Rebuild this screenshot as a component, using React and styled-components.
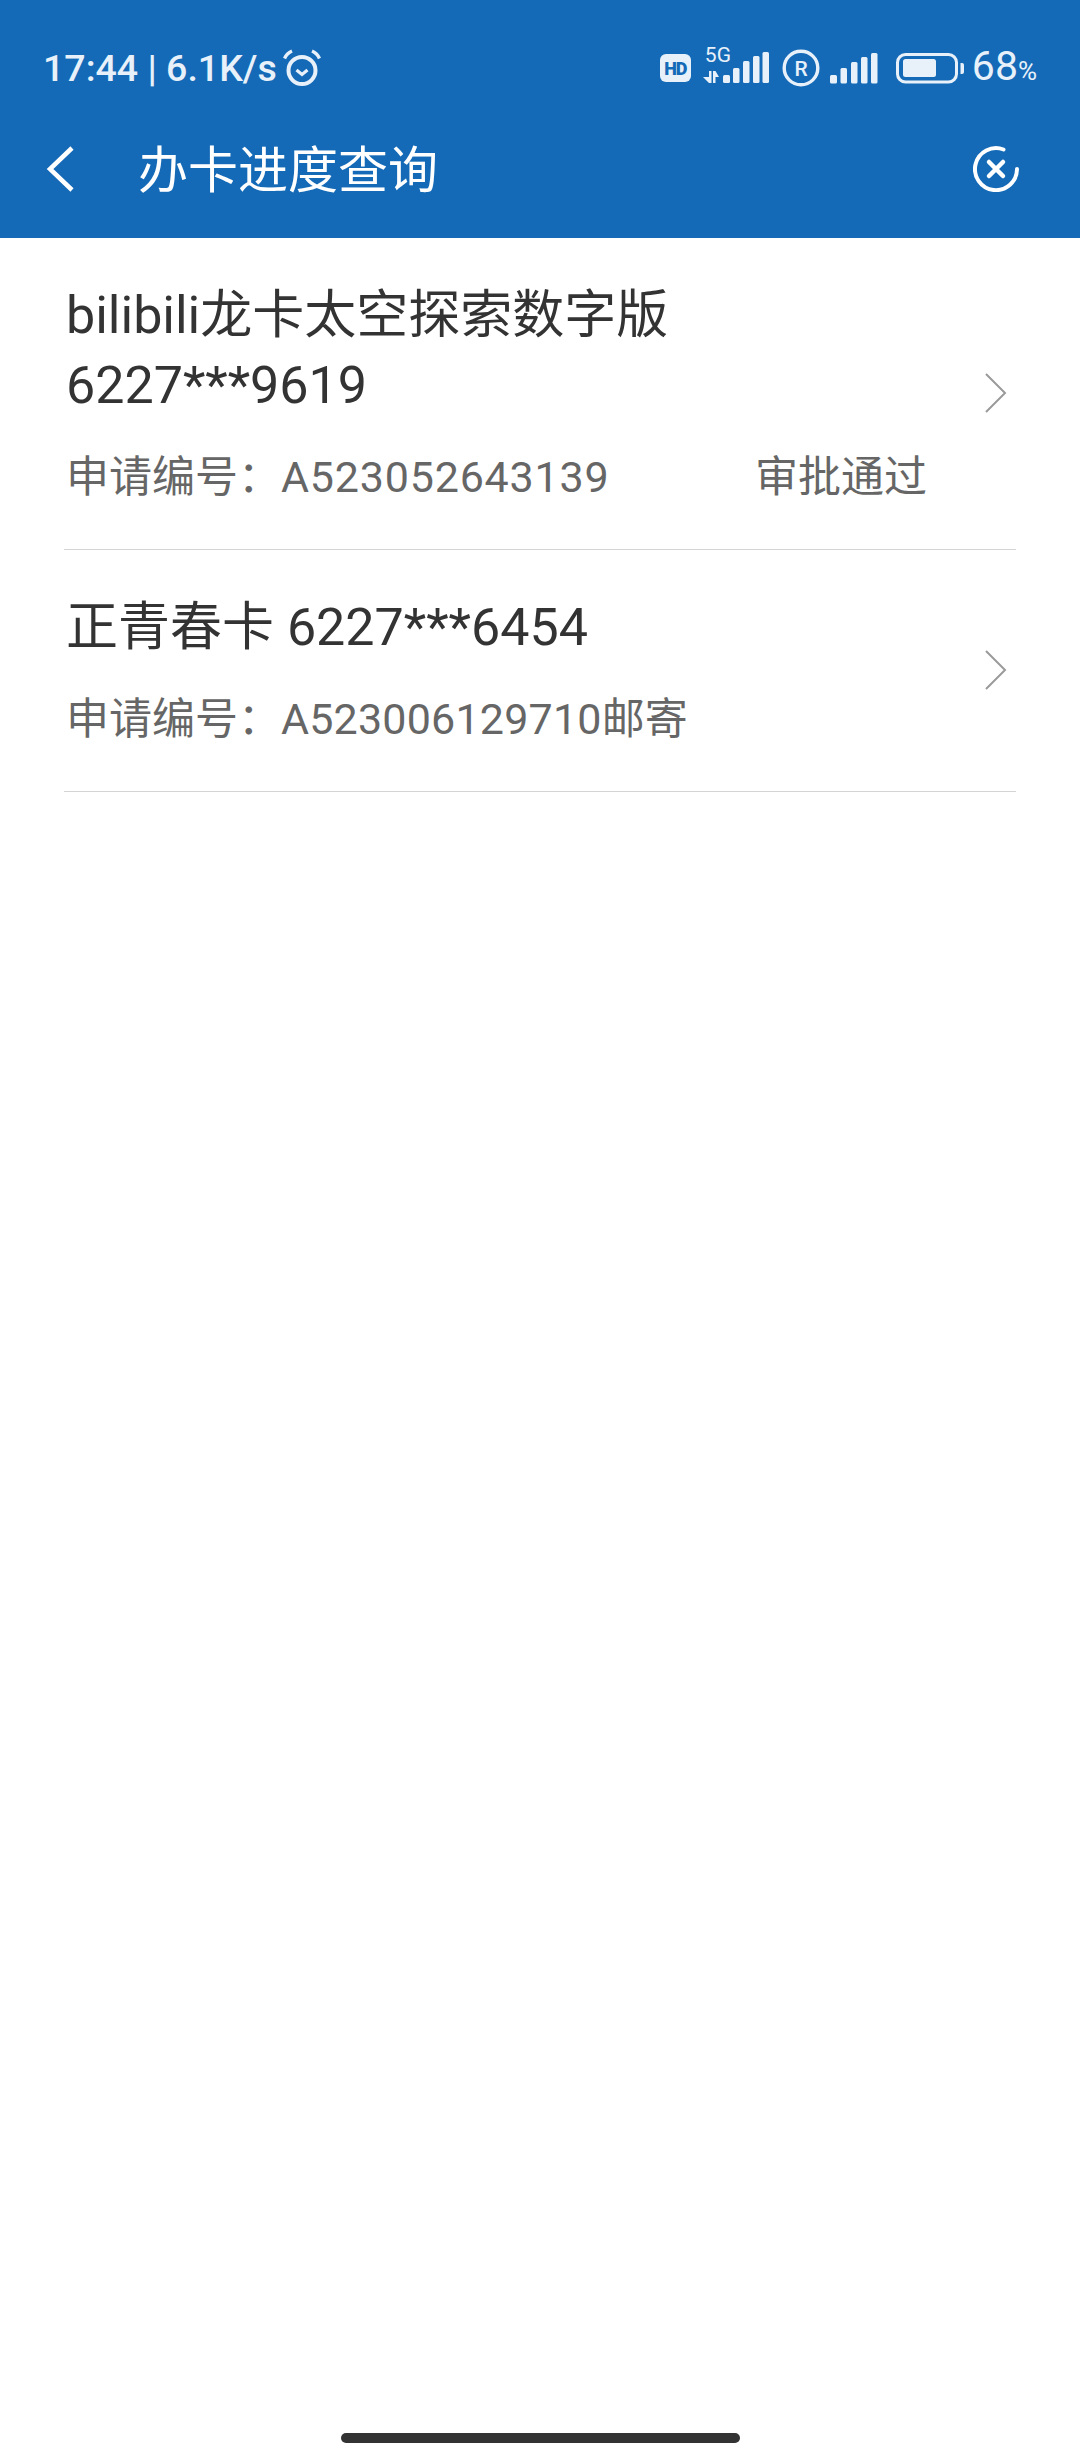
import React from "react";
import styled, { createGlobalStyle } from "styled-components";

const GlobalStyle = createGlobalStyle`
  html, body {
    margin: 0;
    padding: 0;
    background: #fff;
  }
  * {
    box-sizing: border-box;
  }
`;

const FONT = `Roboto, "Noto Sans CJK SC", sans-serif`;

const applications = [
  {
    id: 1,
    title: ["bilibili龙卡太空探索数字版", "6227***9619"],
    code: "A523052643139",
    codeSpacing: 0.8,
    status: "审批通过",
    farStatus: true
  },
  {
    id: 2,
    title: ["正青春卡 6227***6454"],
    code: "A523006129710",
    codeSpacing: 0.2,
    status: "邮寄",
    farStatus: false
  }
];

const App = () => {
  return (
    <Page>
      <GlobalStyle />
      <Header>
        <StatusBar>
          <StatusLeft>
            <Clock>17:44 | 6.1K/s</Clock>
            <AlarmIcon />
          </StatusLeft>
          <StatusRight>
            <HdBadge>HD</HdBadge>
            <Network>
              <NetworkLabel>5G</NetworkLabel>
              <NetworkSignal />
            </Network>
            <RoamingIcon />
            <PlainSignal />
            <BatteryIcon />
            <BatteryLevel>
              68<small>%</small>
            </BatteryLevel>
          </StatusRight>
        </StatusBar>
        <Toolbar>
          <BackIcon />
          <ToolbarTitle>办卡进度查询</ToolbarTitle>
          <CloseIcon />
        </Toolbar>
      </Header>
      <List>
        {applications.map(item => (
          <Row key={item.id}>
            <RowBody>
              <Title>
                {item.title.map(line => (
                  <div key={line}>{line}</div>
                ))}
              </Title>
              <Meta>
                <span>申请编号：</span>
                <Code $spacing={item.codeSpacing}>{item.code}</Code>
                <Status $far={item.farStatus}>{item.status}</Status>
              </Meta>
            </RowBody>
            <Chevron />
          </Row>
        ))}
      </List>
      <HomeBar />
    </Page>
  );
};

const AlarmIcon = () => (
  <AlarmSvg viewBox="0 0 38 38" fill="none" stroke="#e8f1fa">
    <circle cx="19" cy="21.5" r="13.5" strokeWidth="4" />
    <path d="M13.5 21l5.5 4.5 5.5-4.5" strokeWidth="3.2" />
    <path d="M1.5 9.5C3 6 5.5 3.5 9 2" strokeWidth="3.4" />
    <path d="M36.5 9.5C35 6 32.5 3.5 29 2" strokeWidth="3.4" />
  </AlarmSvg>
);

const NetworkSignal = () => (
  <svg width="68" height="32" viewBox="0 0 68 32" fill="#e8f1fa">
    <path d="M1 25h6v-6h2.500v12H7z" />
    <path d="M11 19h2.500L17 25h-3.500v6H11z" />
    <rect x="21" y="23" width="7" height="8" rx="1.500" />
    <rect x="31" y="16" width="6.500" height="15" rx="1.500" />
    <rect x="41" y="9" width="6.500" height="22" rx="1.500" />
    <rect x="51" y="4" width="6.500" height="27" rx="1.500" />
    <rect x="60.500" y="0" width="6.500" height="31" rx="1.500" />
  </svg>
);

const RoamingIcon = () => (
  <RoamingSvg viewBox="0 0 38 38">
    <circle cx="19" cy="19" r="16.800" fill="none" stroke="#e8f1fa" strokeWidth="3.400" />
    <text
      x="19"
      y="26.500"
      textAnchor="middle"
      fontFamily="Roboto, sans-serif"
      fontWeight="500"
      fontSize="21"
      fill="#e8f1fa"
    >
      R
    </text>
  </RoamingSvg>
);

const PlainSignal = () => (
  <PlainSignalSvg viewBox="0 0 48 31" fill="#e8f1fa">
    <rect x="0" y="22" width="7" height="8.500" rx="1.500" />
    <rect x="10.500" y="15" width="6.500" height="15.500" rx="1.500" />
    <rect x="21" y="9" width="6.500" height="21.500" rx="1.500" />
    <rect x="31" y="4" width="6.500" height="26.500" rx="1.500" />
    <rect x="41" y="0" width="6.500" height="30.500" rx="1.500" />
  </PlainSignalSvg>
);

const BatteryIcon = () => (
  <BatterySvg viewBox="0 0 70 31">
    <rect x="1.500" y="1.500" width="59" height="27.500" rx="8" fill="none" stroke="#e8f1fa" strokeWidth="3" />
    <rect x="7" y="6" width="33" height="18" rx="2.500" fill="#e8f1fa" />
    <path d="M64.500 10h1.500a2 2 0 0 1 2 2v7a2 2 0 0 1-2 2h-1.500z" fill="#e8f1fa" />
  </BatterySvg>
);

const BackIcon = () => (
  <BackSvg viewBox="0 0 30 48" fill="none" stroke="#fff" strokeWidth="4.500">
    <path d="M26 3L4 24l22 21" />
  </BackSvg>
);

const CloseIcon = () => (
  <CloseSvg viewBox="0 0 46 46" fill="none" stroke="#fff" strokeWidth="4" strokeLinecap="round">
    <path d="M30.500 3.500A21 21 0 1 0 44 23" />
    <path d="M16 16l14 14M30 16L16 30" strokeWidth="4.500" />
  </CloseSvg>
);

const Chevron = () => (
  <ChevronSvg viewBox="0 0 22 40" fill="none" stroke="#9a9a9a" strokeWidth="2">
    <path d="M1 1l19 19L1 39" />
  </ChevronSvg>
);

const Page = styled.div`
  display: flex;
  flex-direction: column;
  min-height: 100vh;
  background: #fff;
  font-family: ${FONT};
`;

const Header = styled.header`
  background: #146ab7;
  color: #fff;
`;

const StatusBar = styled.div`
  display: flex;
  align-items: center;
  justify-content: space-between;
  height: 100px;
  padding: 36px 43px 0 43px;
  color: #e8f1fa;
`;

const StatusLeft = styled.div`
  display: flex;
  align-items: center;
  gap: 6px;
`;

const Clock = styled.span`
  font-size: 37.5px;
  font-weight: 500;
  line-height: 44px;
`;

const AlarmSvg = styled.svg`
  width: 38px;
  height: 38px;
`;

const StatusRight = styled.div`
  display: flex;
  align-items: center;
`;

const HdBadge = styled.span`
  display: flex;
  align-items: center;
  justify-content: center;
  width: 31px;
  height: 28px;
  border-radius: 6px;
  background: #e8f1fa;
  color: #146ab7;
  font-size: 18px;
  font-weight: 900;
  letter-spacing: -1px;
`;

const Network = styled.div`
  position: relative;
  width: 68px;
  height: 32px;
  margin-left: 11px;
`;

const NetworkLabel = styled.span`
  position: absolute;
  left: 3px;
  top: -7px;
  font-size: 21px;
  line-height: 20px;
`;

const RoamingSvg = styled.svg`
  width: 38px;
  height: 38px;
  margin-left: 12px;
`;

const PlainSignalSvg = styled.svg`
  width: 48px;
  height: 31px;
  margin-left: 10px;
`;

const BatterySvg = styled.svg`
  width: 70px;
  height: 31px;
  margin-left: 18px;
`;

const BatteryLevel = styled.span`
  margin-left: 6px;
  font-size: 41px;
  line-height: 44px;
  font-weight: 400;

  small {
    font-size: 26px;
  }
`;

const Toolbar = styled.div`
  display: flex;
  align-items: center;
  height: 138px;
  padding: 0 61px 0 46px;
`;

const BackSvg = styled.svg`
  width: 30px;
  height: 48px;
  flex-shrink: 0;
`;

const ToolbarTitle = styled.h1`
  flex: 1;
  margin: 3px 0 0 62px;
  font-size: 50px;
  font-weight: 400;
  line-height: 70px;
`;

const CloseSvg = styled.svg`
  width: 46px;
  height: 46px;
  flex-shrink: 0;
`;

const List = styled.div`
  display: flex;
  flex-direction: column;
  padding: 0 64px;
`;

const Row = styled.div`
  display: flex;
  align-items: center;
  padding: 43px 9px 37px 2px;
  border-bottom: 1px solid #d4d4d4;
`;

const RowBody = styled.div`
  flex: 1;
  min-width: 0;
  padding-right: 58px;
`;

const Title = styled.div`
  color: #333;
  font-size: 52px;
  line-height: 70px;
`;

const Meta = styled.div`
  display: flex;
  margin-top: 21px;
  color: #666;
  font-size: 43px;
  line-height: 70px;
`;

const Code = styled.span`
  letter-spacing: ${props => props.$spacing}px;
`;

const Status = styled.span`
  margin-left: ${props => (props.$far ? "auto" : "0")};
`;

const ChevronSvg = styled.svg`
  width: 22px;
  height: 40px;
  margin-bottom: 8px;
  flex-shrink: 0;
`;

const HomeBar = styled.div`
  width: 399px;
  height: 10px;
  margin: auto auto 17px;
  border-radius: 5px;
  background: #333;
`;

export default App;
